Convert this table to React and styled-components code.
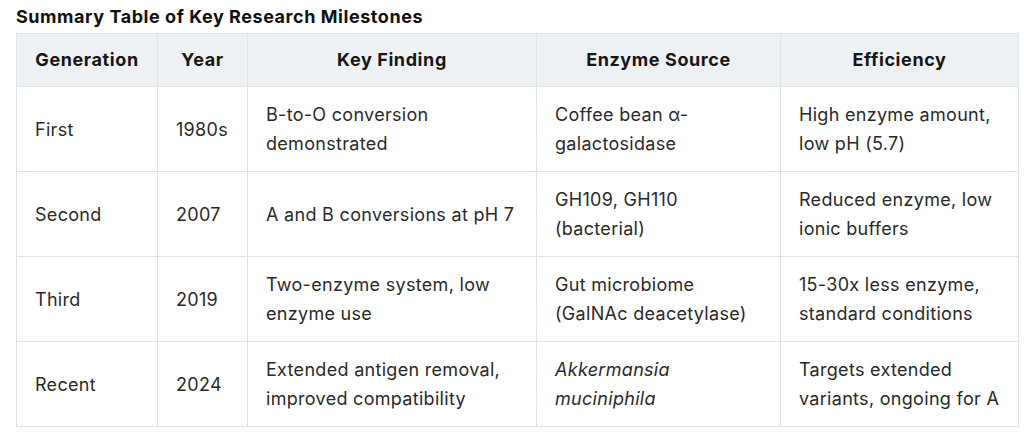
import React from "react";
import styled, { createGlobalStyle } from "styled-components";

const Global = createGlobalStyle`
  html, body { margin: 0; padding: 0; background: #ffffff; }
  body { font-family: Inter, "Noto Sans", "Liberation Sans", sans-serif; color: #222; }
`;

const Page = styled.div`
  padding: 5px 6px 0 16px;
`;

const Title = styled.h3`
  margin: 0 0 4px 0;
  font-size: 18px;
  line-height: 24px;
  font-weight: 700;
  letter-spacing: 0.55px;
  color: #111;
`;

const Table = styled.table`
  border-collapse: collapse;
  width: 1002px;
  table-layout: fixed;
  border: 1px solid #dfe4e9;
`;

const Th = styled.th`
  background: #eef1f3;
  border: 1px solid #dfe4e9;
  padding: 12px 18px;
  font-size: 18px;
  line-height: 28px;
  font-weight: 700;
  letter-spacing: 0.6px;
  color: #161616;
  text-align: center;
`;

const Td = styled.td`
  border: 1px solid #dfe4e9;
  padding: 13px 16px 13px 18px;
  font-size: 18px;
  line-height: 29px;
  font-weight: 400;
  letter-spacing: 0.3px;
  color: #2a2a2a;
  text-align: left;
  vertical-align: middle;
  font-style: ${(p) => (p.$italic ? "italic" : "normal")};
`;

const widths = [141, 90, 289, 244, 238];
const headers = ["Generation", "Year", "Key Finding", "Enzyme Source", "Efficiency"];

const rows = [
  ["First", "1980s", "B-to-O conversion demonstrated", "Coffee bean α-galactosidase", "High enzyme amount, low pH (5.7)"],
  ["Second", "2007", "A and B conversions at pH 7", "GH109, GH110 (bacterial)", "Reduced enzyme, low ionic buffers"],
  ["Third", "2019", "Two-enzyme system, low enzyme use", "Gut microbiome (GalNAc deacetylase)", "15-30x less enzyme, standard conditions"],
  ["Recent", "2024", "Extended antigen removal, improved compatibility", "Akkermansia muciniphila", "Targets extended variants, ongoing for A"],
];

export default function App() {
  return (
    <Page>
      <Global />
      <Title>Summary Table of Key Research Milestones</Title>
      <Table>
        <colgroup>
          {widths.map((w, i) => (
            <col key={i} style={{ width: w }} />
          ))}
        </colgroup>
        <thead>
          <tr>
            {headers.map((h) => (
              <Th key={h}>{h}</Th>
            ))}
          </tr>
        </thead>
        <tbody>
          {rows.map((r) => (
            <tr key={r[0]}>
              {r.map((c, i) => (
                <Td key={i} $italic={r[0] === "Recent" && i === 3}>
                  {c}
                </Td>
              ))}
            </tr>
          ))}
        </tbody>
      </Table>
    </Page>
  );
}
